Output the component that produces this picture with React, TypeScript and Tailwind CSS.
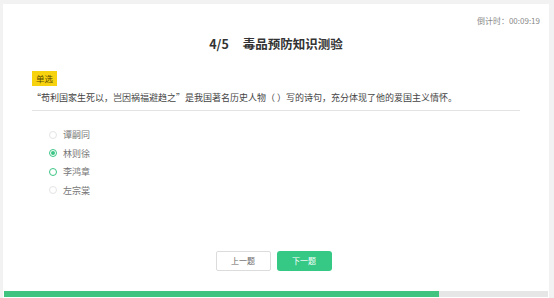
import React from 'react';

const options = [
  { label: '谭嗣同', state: 'idle' },
  { label: '林则徐', state: 'checked' },
  { label: '李鸿章', state: 'hover' },
  { label: '左宗棠', state: 'idle' },
];

export default function App() {
  const font = { fontFamily: '"Noto Sans CJK SC", "Liberation Sans", sans-serif' };
  return (
    <div lang="zh-CN" style={font} className="w-[554px] h-[298px] bg-[#f2f2f2] pl-[3px] pr-[5px] pt-[4px] overflow-hidden">
      <div className="bg-white h-full flex flex-col">
        <div className="flex justify-end pr-[9px] pt-[12px] text-[8px] leading-[10px] text-[#8a8a8a]">
          倒计时：00:09:19
        </div>
        <div className="mt-[9px] flex justify-center gap-[14px] text-[12.5px] leading-[18px] font-bold text-[#333]">
          <span>4/5</span>
          <span>毒品预防知识测验</span>
        </div>
        <div className="px-[29px] mt-[10px]">
          <span className="inline-block bg-[#f6d20f] px-[4px] text-[8.5px] leading-[15px] text-[#5a4a00]">单选</span>
          <div className="mt-[4px] pb-[5px] border-b border-[#e3e3e3] text-[9px] leading-[14px] text-[#444] whitespace-nowrap">
            “苟利国家生死以，岂因祸福避趋之”是我国著名历史人物（ ）写的诗句，充分体现了他的爱国主义情怀。
          </div>
        </div>
        <div className="flex flex-col gap-[5px] pl-[46px] mt-[17px]">
          {options.map(o => (
            <div key={o.label} className="flex items-center gap-[6px] h-[13.5px] text-[9px] text-[#777]">
              <span
                className={`w-[8px] h-[8px] rounded-full border flex items-center justify-center ${
                  o.state === 'idle' ? 'border-[#e4e4e4]' : 'border-[#3cc685]'
                }`}
              >
                {o.state === 'checked' && <span className="w-[4px] h-[4px] rounded-full bg-[#3cc685]" />}
              </span>
              <span>{o.label}</span>
            </div>
          ))}
        </div>
        <div className="flex justify-center gap-[6px] mt-[54px] pr-[5px]">
          <button className="w-[55px] h-[20px] border border-[#dcdcdc] rounded-[2px] bg-white text-[8px] text-[#666]">上一题</button>
          <button className="w-[55px] h-[20px] rounded-[3px] bg-[#35c985] text-[8px] text-white">下一题</button>
        </div>
        <div className="mt-auto mb-[1px] mx-[1px] h-[6px] bg-[#e6e6e6]">
          <div className="h-full w-[80%] bg-[#41c47f]" />
        </div>
      </div>
    </div>
  );
}
